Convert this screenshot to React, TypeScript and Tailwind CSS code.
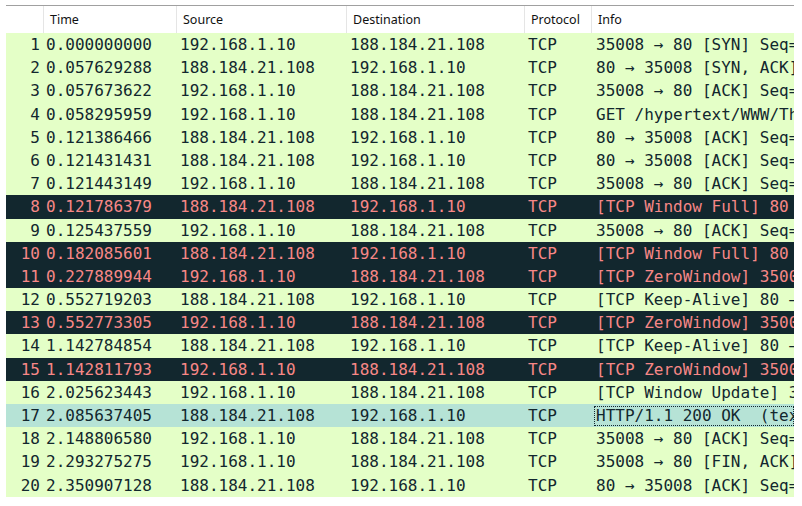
type Packet = {
  no: number
  time: string
  src: string
  dst: string
  info: string
  kind?: 'bad' | 'sel'
}

const HOST = '192.168.1.10'
const SERVER = '188.184.21.108'

const packets: Packet[] = [
  { no: 1, time: '0.000000000', src: HOST, dst: SERVER, info: '35008 → 80 [SYN] Seq=0 Win=8192 Len=0 MSS=1460' },
  { no: 2, time: '0.057629288', src: SERVER, dst: HOST, info: '80 → 35008 [SYN, ACK] Seq=0 Ack=1 Win=29200' },
  { no: 3, time: '0.057673622', src: HOST, dst: SERVER, info: '35008 → 80 [ACK] Seq=1 Ack=1 Win=65700' },
  { no: 4, time: '0.058295959', src: HOST, dst: SERVER, info: 'GET /hypertext/WWW/TheProject.html HTTP/1.1' },
  { no: 5, time: '0.121386466', src: SERVER, dst: HOST, info: '80 → 35008 [ACK] Seq=1 Ack=385 Win=30336' },
  { no: 6, time: '0.121431431', src: SERVER, dst: HOST, info: '80 → 35008 [ACK] Seq=1 Ack=385 Win=30336' },
  { no: 7, time: '0.121443149', src: HOST, dst: SERVER, info: '35008 → 80 [ACK] Seq=385 Ack=1461 Win=1460' },
  { no: 8, time: '0.121786379', src: SERVER, dst: HOST, info: '[TCP Window Full] 80 → 35008 [ACK] Seq=1461', kind: 'bad' },
  { no: 9, time: '0.125437559', src: HOST, dst: SERVER, info: '35008 → 80 [ACK] Seq=385 Ack=2921 Win=0' },
  { no: 10, time: '0.182085601', src: SERVER, dst: HOST, info: '[TCP Window Full] 80 → 35008 [ACK] Seq=2921', kind: 'bad' },
  { no: 11, time: '0.227889944', src: HOST, dst: SERVER, info: '[TCP ZeroWindow] 35008 → 80 [ACK] Seq=385', kind: 'bad' },
  { no: 12, time: '0.552719203', src: SERVER, dst: HOST, info: '[TCP Keep-Alive] 80 → 35008 [ACK] Seq=2920' },
  { no: 13, time: '0.552773305', src: HOST, dst: SERVER, info: '[TCP ZeroWindow] 35008 → 80 [ACK] Seq=385', kind: 'bad' },
  { no: 14, time: '1.142784854', src: SERVER, dst: HOST, info: '[TCP Keep-Alive] 80 → 35008 [ACK] Seq=2920' },
  { no: 15, time: '1.142811793', src: HOST, dst: SERVER, info: '[TCP ZeroWindow] 35008 → 80 [ACK] Seq=385', kind: 'bad' },
  { no: 16, time: '2.025623443', src: HOST, dst: SERVER, info: '[TCP Window Update] 35008 → 80 [ACK]' },
  { no: 17, time: '2.085637405', src: SERVER, dst: HOST, info: 'HTTP/1.1 200 OK  (text/html)', kind: 'sel' },
  { no: 18, time: '2.148806580', src: HOST, dst: SERVER, info: '35008 → 80 [ACK] Seq=385 Ack=4336 Win=65700' },
  { no: 19, time: '2.293275275', src: HOST, dst: SERVER, info: '35008 → 80 [FIN, ACK] Seq=385 Ack=4336' },
  { no: 20, time: '2.350907128', src: SERVER, dst: HOST, info: '80 → 35008 [ACK] Seq=4336 Ack=386 Win=30336' },
]

const cols = 'grid grid-cols-[37px_133px_170px_178px_67px_203px]'

function HeaderCell({ label, first }: { label: string; first?: boolean }) {
  return (
    <div
      className={`h-[27px] pl-[6px] leading-[27px] whitespace-nowrap overflow-hidden ${
        first ? '' : 'border-l border-[#e5e5e5]'
      }`}
    >
      {label}
    </div>
  )
}

function Row({ p }: { p: Packet }) {
  const tone =
    p.kind === 'bad'
      ? 'bg-[#12272e] text-[#f78787]'
      : p.kind === 'sel'
        ? 'bg-[#b6e3d6] text-[#12272e]'
        : 'bg-[#e4ffc7] text-[#12272e]'

  return (
    <div className={`${cols} h-[23.2px] leading-[23.2px] ${tone}`}>
      <div className="pr-[3px] text-right whitespace-pre overflow-hidden">{p.no}</div>
      <div className="pl-[3px] whitespace-pre overflow-hidden">{p.time}</div>
      <div className="pl-[4px] whitespace-pre overflow-hidden">{p.src}</div>
      <div className="pl-[4px] whitespace-pre overflow-hidden">{p.dst}</div>
      <div className="pl-[4px] whitespace-pre overflow-hidden">TCP</div>
      <div className="relative pl-[5px] whitespace-pre overflow-hidden">
        {p.info}
        {p.kind === 'sel' && (
          <span className="absolute left-[3px] right-0 top-[2px] bottom-[1px] border border-dotted border-[#12272e]" />
        )}
      </div>
    </div>
  )
}

export default function App() {
  return (
    <div className="w-[802px] h-[506px] bg-white pl-[6px] pt-[5px] overflow-hidden">
      <div className="w-[788px] border-t border-[#a0a0a0]">
        {/* column headers */}
        <div className={`${cols} bg-white text-[12.5px] text-[#111] font-['Noto_Sans',sans-serif]`}>
          <HeaderCell label="" first />
          <HeaderCell label="Time" />
          <HeaderCell label="Source" />
          <HeaderCell label="Destination" />
          <HeaderCell label="Protocol" />
          <HeaderCell label="Info" />
        </div>

        {/* packet list */}
        <div className="text-[16px] font-['DejaVu_Sans_Mono',monospace]">
          {packets.map((p) => (
            <Row key={p.no} p={p} />
          ))}
        </div>
      </div>
    </div>
  )
}
